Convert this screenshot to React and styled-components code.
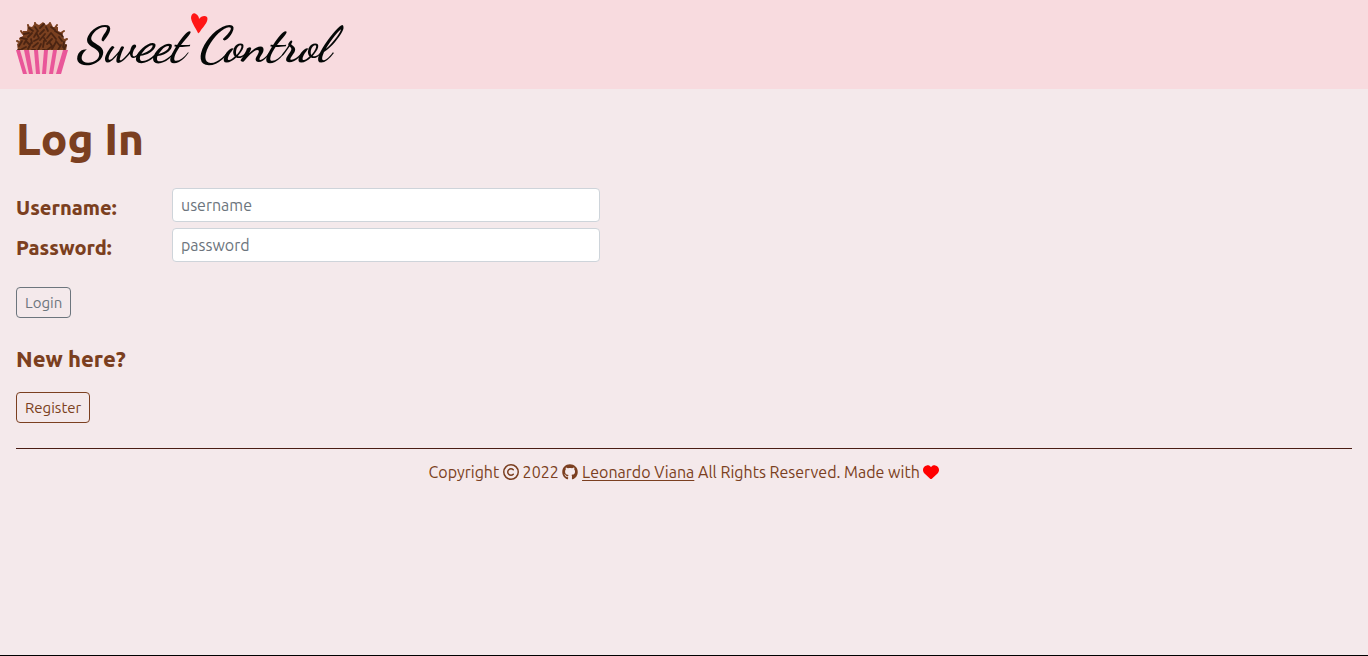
import React from "react";
import styled, { createGlobalStyle } from "styled-components";
import { FaGithub, FaHeart, FaRegCopyright } from "react-icons/fa6";

const brown = "#7b3f20";

const GlobalStyle = createGlobalStyle`
  *, *::before, *::after { box-sizing: border-box; }
  body {
    margin: 0;
    background: #f4e9eb;
    color: ${brown};
    font-family: Ubuntu, "Noto Sans", sans-serif;
    font-size: 16px;
    line-height: 24px;
  }
`;

const Page = styled.div`
  min-height: 100vh;
  border-bottom: 1px solid #000;
`;

const Header = styled.header`
  padding: 13px 16px 12px;
  background: #f8dbdf;
`;

const Brand = styled.a`
  display: flex;
  align-items: center;
  gap: 8px;
  width: fit-content;
  height: 64px;
  color: #050807;
  text-decoration: none;
`;

const Cupcake = styled.svg`
  width: 52px;
  height: 52px;
  margin-top: 6px;
`;

const Wordmark = styled.span`
  position: relative;
  font-family: "Dancing Script", "Kaushan Script", "Liberation Serif", serif;
  font-style: italic;
  font-weight: 700;
  font-size: 50px;
  line-height: 68px;
  white-space: nowrap;
`;

const BrandHeart = styled.svg`
  position: absolute;
  top: 2px;
  left: 115px;
  width: 17px;
  height: 21px;
`;

const Main = styled.main`
  padding: 24px 16px 0;
`;

const Title = styled.h1`
  margin: 0 0 24px;
  font-size: 44px;
  line-height: 51px;
  font-weight: 800;
`;

const Fields = styled.div`
  display: grid;
  grid-template-columns: 140px 1fr;
  gap: 6px 16px;
  max-width: 584px;
`;

const Label = styled.label`
  padding-top: 6px;
  font-size: 20px;
  line-height: 28px;
  font-weight: 800;
`;

const Input = styled.input`
  width: 100%;
  height: 34px;
  padding: 0 8px;
  border: 1px solid #ced4da;
  border-radius: 4px;
  background: #fff;
  color: #212529;
  font: inherit;

  &::placeholder {
    color: #6c757d;
    opacity: 1;
  }
`;

const Button = styled.button`
  display: block;
  height: 31px;
  padding: 0 8px;
  border: 1px solid ${(p) => (p.$muted ? "#6c757d" : brown)};
  border-radius: 4px;
  background: transparent;
  color: ${(p) => (p.$muted ? "#6c757d" : brown)};
  font: inherit;
  font-size: 15px;
  line-height: 21px;
`;

const Actions = styled.div`
  margin-top: 25px;
`;

const Subtitle = styled.h2`
  margin: 27px 0 19px;
  font-size: 22px;
  line-height: 28px;
  font-weight: 800;
`;

const Footer = styled.footer`
  margin: 25px 16px 0;
  padding-top: 11px;
  border-top: 1px solid #4a1d14;
  text-align: center;
  font-size: 16px;

  svg {
    width: 16px;
    height: 16px;
    vertical-align: -2px;
  }
`;

const AuthorLink = styled.a`
  color: inherit;
  text-underline-offset: 2px;
`;

const LoveIcon = styled(FaHeart)`
  color: #f00;
`;

const stripes = [
  "M0 28H4L11 52H7Z",
  "M8 28H13L17 52H13Z",
  "M18 28H22L24 52H20Z",
  "M28 28H32L30 52H26Z",
  "M37 28H41L37 52H33Z",
  "M47 28H52L45 52H40Z",
];

function CupcakeLogo() {
  return (
    <Cupcake viewBox="0 0 52 52" aria-hidden="true">
      <path
        d="M2 29L1 22L4 20L3 16L7 14L7 9L11 9L12 4L16 5L19 1L23 3L27 0L30 3L35 1L37 5L42 5L42 9L47 11L46 15L50 18L49 22L51 23L50 29Z"
        fill="#7a4020"
      />
      <g fill="none" strokeLinecap="round">
        <path
          stroke="#7a4020"
          strokeWidth="2"
          d="M7 12l-2-3M13 7l-1-4M20 4l-1-3M32 4l2-3M39 6l2-3M45 11l3-2M49 18l2-1M3 20l-2-1"
        />
        <path
          stroke="#4b2412"
          strokeWidth="1.8"
          d="M3 24l3-5M6 27l4-2M5 16l5 1M8 22l3-5M8 12l5-1M12 27l3-6M12 15l4-4M13 6l4 3M15 17l1 4M17 25l5-4M18 15l3-5M19 5l3 4M18 19l4-2M22 28l3-6M24 6l4-4M24 12l4-4M24 18l5-6M27 25l1-6M30 5l2 4M31 28l4-3M31 16l4-5M31 22l5-5M35 5l4 3M36 12l4 5M36 27l4-7M39 9l5 3M40 19l4 5M43 15l3 4M42 28l3-5M45 12l2 3M48 20l-1 5M48 27l2-4M11 20l3 3M21 12l2 4M28 16l2 3M34 21l2 3M2 28h4M16 28h3M27 28h2"
        />
      </g>
      <path d="M0 28H52L45 52H7Z" fill="#f6c8cd" />
      {stripes.map((d) => (
        <path key={d} d={d} fill="#e95699" />
      ))}
    </Cupcake>
  );
}

export default function App() {
  return (
    <>
      <GlobalStyle />
      <Page>
        <Header>
          <Brand href="#">
            <CupcakeLogo />
            <Wordmark>
              Sweet Control
              <BrandHeart viewBox="0 0 17 21" aria-hidden="true">
                <path
                  d="M7 20C5 15 1 11 0 5C0 1 3-1 5 1C7 2 8 4 8 6C10 3 14 2 16 4C18 8 13 13 10 17Q8 21 7 20Z"
                  fill="#ff1616"
                />
              </BrandHeart>
            </Wordmark>
          </Brand>
        </Header>
        <Main>
          <Title>Log In</Title>
          <form onSubmit={(e) => e.preventDefault()}>
            <Fields>
              <Label htmlFor="username">Username:</Label>
              <Input id="username" type="text" placeholder="username" />
              <Label htmlFor="password">Password:</Label>
              <Input id="password" type="password" placeholder="password" />
            </Fields>
            <Actions>
              <Button type="submit" $muted>Login</Button>
            </Actions>
          </form>
          <Subtitle>New here?</Subtitle>
          <Button type="button">Register</Button>
        </Main>
        <Footer>
          Copyright <FaRegCopyright /> 2022 <FaGithub />{" "}
          <AuthorLink href="#">Leonardo Viana</AuthorLink> All Rights Reserved. Made with{" "}
          <LoveIcon />
        </Footer>
      </Page>
    </>
  );
}
